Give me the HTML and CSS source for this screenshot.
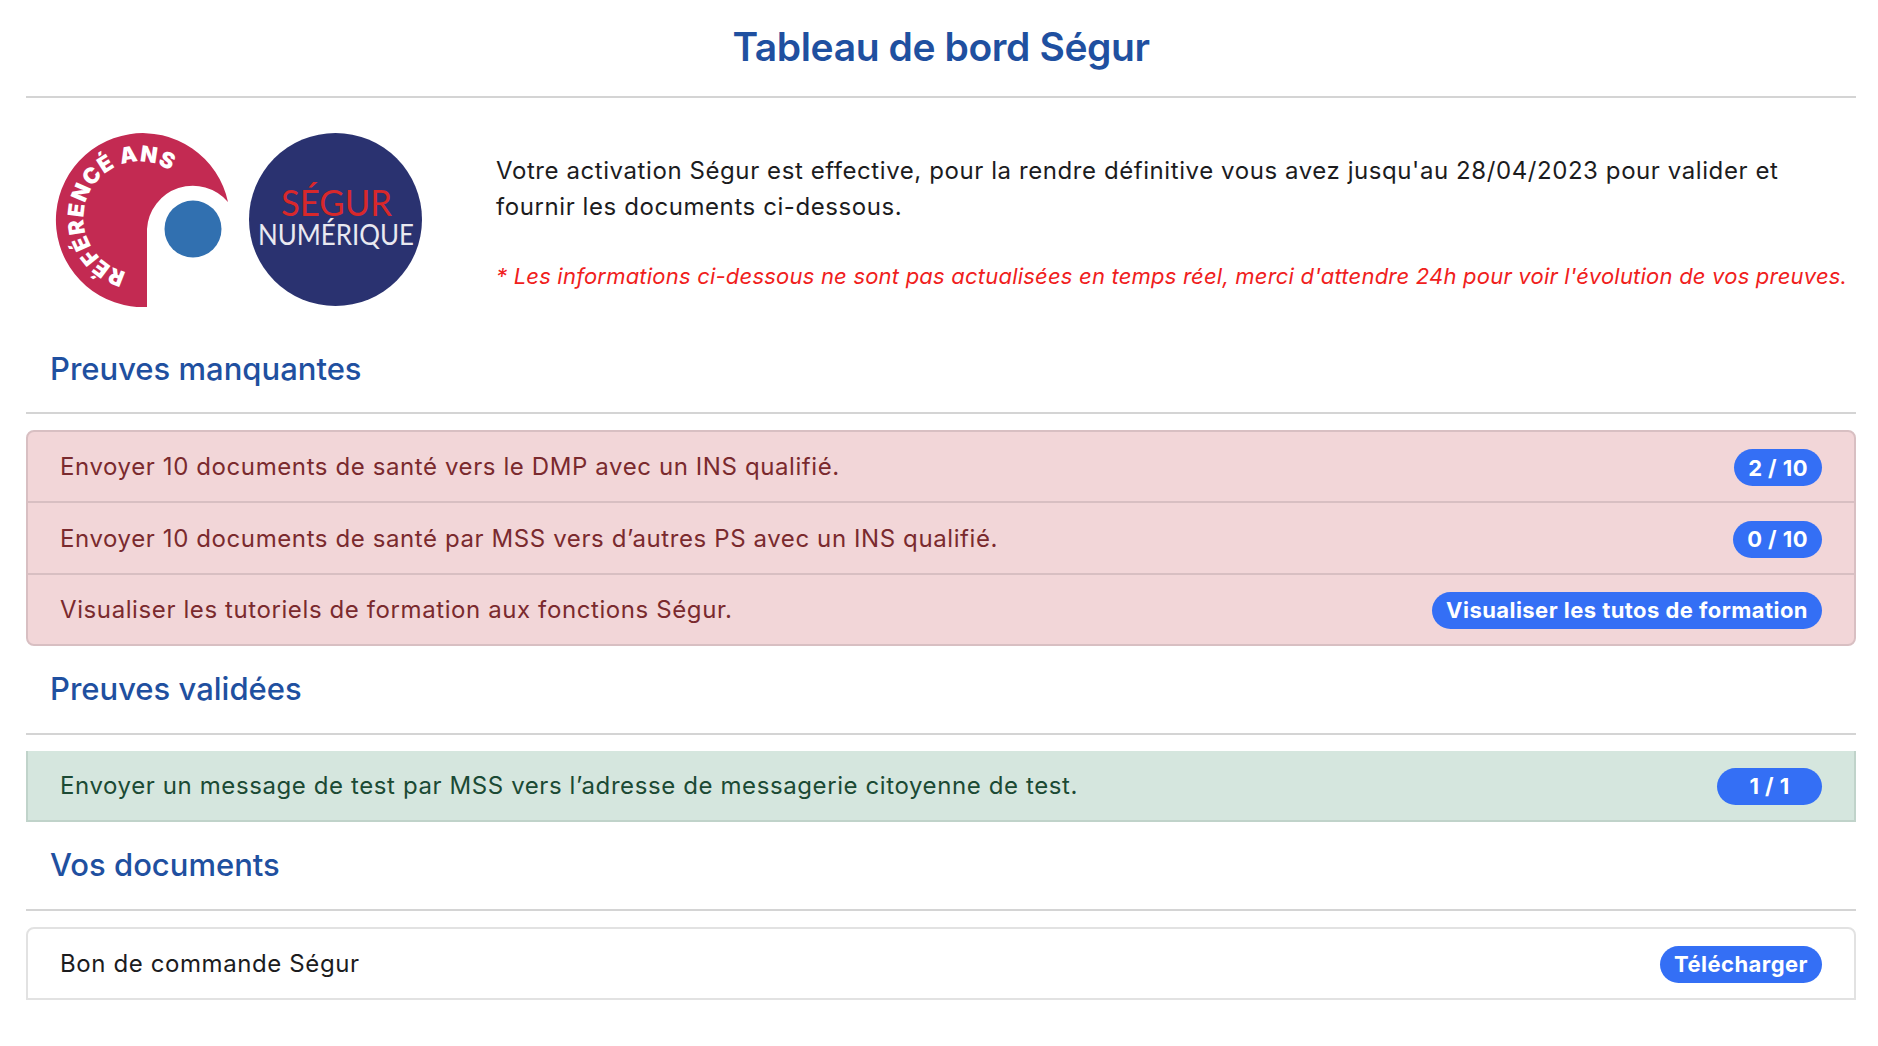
FILE: index.html
```html
<!DOCTYPE html>
<html lang="fr">
<head>
  <meta charset="UTF-8">
  <title>Tableau de bord Ségur</title>
  <link rel="stylesheet" href="styles.css">
</head>
<body>
  <h1 class="title">Tableau de bord Ségur</h1>
  <hr class="rule">

  <div class="intro">
    <svg class="logos" viewBox="50 125 380 190" width="380" height="190" role="img" aria-label="Référencé ANS, Ségur numérique">
      <defs>
        <path id="ansArc" d="M126 272 A56 56 0 1 1 177 176"/>
      </defs>
      <path d="M147 307 A87 87 0 1 1 228 202 A46 46 0 0 0 147 229 Z" fill="#c32a52"/>
      <circle cx="193" cy="229" r="28.5" fill="#3170b0"/>
      <text class="logo-ans"><textPath href="#ansArc" textLength="194">RÉFÉRENCÉ ANS</textPath></text>
      <circle cx="335.5" cy="219.5" r="86.5" fill="#2a3270"/>
      <text class="logo-segur" x="281" y="215.5" textLength="111" lengthAdjust="spacingAndGlyphs">SÉGUR</text>
      <text class="logo-num" x="258" y="245" textLength="156" lengthAdjust="spacingAndGlyphs">NUMÉRIQUE</text>
    </svg>
    <div class="intro-text">
      <p class="lead">Votre activation Ségur est effective, pour la rendre définitive vous avez jusqu'au 28/04/2023 pour valider et fournir les documents ci-dessous.</p>
      <p class="note">* Les informations ci-dessous ne sont pas actualisées en temps réel, merci d'attendre 24h pour voir l'évolution de vos preuves.</p>
    </div>
  </div>

  <h2 class="section-title first">Preuves manquantes</h2>
  <hr class="rule">
  <ul class="list list-danger">
    <li class="row"><span>Envoyer 10 documents de santé vers le DMP avec un INS qualifié.</span><a class="pill">2 / 10</a></li>
    <li class="row"><span>Envoyer 10 documents de santé par MSS vers d’autres PS avec un INS qualifié.</span><a class="pill">0 / 10</a></li>
    <li class="row"><span>Visualiser les tutoriels de formation aux fonctions Ségur.</span><a class="pill">Visualiser les tutos de formation</a></li>
  </ul>

  <h2 class="section-title">Preuves validées</h2>
  <hr class="rule">
  <ul class="list list-success">
    <li class="row"><span>Envoyer un message de test par MSS vers l’adresse de messagerie citoyenne de test.</span><a class="pill pill-wide">1 / 1</a></li>
  </ul>

  <h2 class="section-title">Vos documents</h2>
  <hr class="rule">
  <ul class="list list-plain">
    <li class="row"><span>Bon de commande Ségur</span><a class="pill">Télécharger</a></li>
  </ul>
</body>
</html>
```

FILE: styles.css
```css
html, body {
  background: #fff;
}
body {
  margin: 0;
  padding: 0 22px 48px 26px;
  font-family: "Inter", "Liberation Sans", sans-serif;
  color: #1c1c1e;
}
.title {
  margin: 0;
  height: 96px;
  line-height: 94px;
  text-align: center;
  font-size: 39px;
  font-weight: 600;
  letter-spacing: -0.4px;
  color: #1f50a0;
}
.rule {
  margin: 0;
  border: 0;
  height: 2px;
  background: #d4d4d4;
}
.intro {
  display: flex;
  height: 215px;
  margin-top: 27px;
}
.logos {
  flex: none;
  margin-left: 24px;
}
.logo-ans {
  font-size: 22px;
  font-weight: 900;
  fill: #fff;
}
.logo-segur {
  font-family: "Lato", sans-serif;
  font-size: 36px;
  fill: #d8282b;
}
.logo-num {
  font-family: "Lato", sans-serif;
  font-size: 28px;
  fill: #e9e9f0;
}
.intro-text {
  margin-left: 66px;
  padding-top: 28px;
}
.lead {
  margin: 0;
  font-size: 24px;
  line-height: 36px;
  letter-spacing: 0.58px;
}
.note {
  margin: 34px 0 0;
  font-size: 22px;
  line-height: 34px;
  letter-spacing: 0.21px;
  font-style: italic;
  color: #f0201c;
}
.section-title {
  margin: 0;
  padding-left: 24px;
  height: 70.5px;
  line-height: 54px;
  font-size: 31px;
  font-weight: 500;
  color: #1f50a0;
}
.section-title.first {
  height: 72px;
  line-height: 58px;
}
.list {
  list-style: none;
  margin: 16px 0 16px;
  padding: 0;
  border: 2px solid;
  border-radius: 8px;
  font-size: 24px;
  letter-spacing: 0.6px;
}
.row {
  display: flex;
  justify-content: space-between;
  align-items: center;
  height: 69.4px;
  padding: 0 32px;
  border-top: 2px solid;
  border-color: inherit;
}
.row:first-child {
  border-top: 0;
}
.list-danger {
  background: #f2d6d8;
  border-color: #d8bfc2;
  color: #7a2a2e;
}
.list-success {
  background: #d5e6de;
  border-color: #c0d3ca;
  border-top: 0;
  border-radius: 0;
  color: #1b4a34;
}
.list-plain {
  background: #fff;
  border-color: #e2e2e2;
  border-radius: 8px 8px 0 0;
}
.pill {
  display: flex;
  align-items: center;
  height: 37px;
  margin-top: 2px;
  padding: 0 14px;
  border-radius: 19px;
  background: #346ff5;
  color: #fff;
  font-size: 22px;
  font-weight: 700;
  letter-spacing: 0.45px;
}
.pill-wide {
  width: 105px;
  padding: 0;
  justify-content: center;
  box-sizing: border-box;
}
```
